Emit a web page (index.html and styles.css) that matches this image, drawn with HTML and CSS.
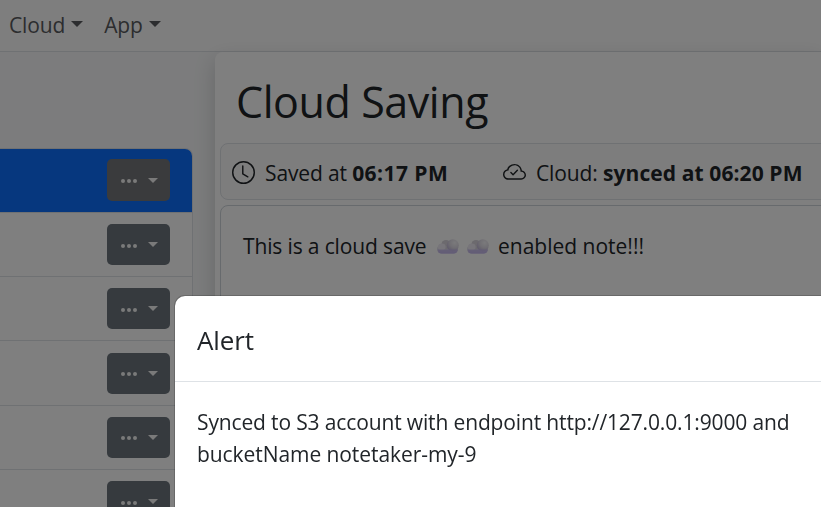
FILE: index.html
```
<!DOCTYPE html>
<html lang="en">
<head>
<meta charset="utf-8">
<title>Cloud Saving</title>
<link rel="stylesheet" href="styles.css">
</head>
<body>
<svg width="0" height="0" class="defs" aria-hidden="true">
  <defs>
    <linearGradient id="puff" x1="0" y1="0" x2="0" y2="1"><stop offset="0" stop-color="#f0edf4"/><stop offset=".55" stop-color="#dedaea"/><stop offset="1" stop-color="#c4b6ec"/></linearGradient>
    <radialGradient id="ball" cx=".65" cy=".3" r=".75"><stop offset="0" stop-color="#f6f5f8"/><stop offset=".55" stop-color="#e0dce6"/><stop offset="1" stop-color="#beb4d6"/></radialGradient>
    <symbol id="cloud" viewBox="0 0 22 15">
      <rect x="0" y="5.5" width="21" height="9" rx="4.5" fill="url(#puff)"/>
      <circle cx="9" cy="5.5" r="4.6" fill="#d8d4dc"/>
      <circle cx="15.8" cy="6.2" r="6" fill="url(#ball)"/>
      <ellipse cx="4.8" cy="8" rx="3.8" ry="3.4" fill="#eeeaf4"/>
      <path d="M.8 10.500h20.200q-1 4-4.500 4h-12Q1.500 14.500 .8 10.500" fill="#c5b9ec" opacity=".8"/>
    </symbol>
  </defs>
</svg>
<div class="app">
  <nav class="nav">
    <a class="nav-link cloud-link"><span>Cloud</span><i class="caret"></i></a>
    <a class="nav-link"><span>App</span><i class="caret"></i></a>
  </nav>
  <div class="main">
    <aside class="side">
      <ul class="list">
        <li class="item active"><button class="btn"><svg class="dots" viewBox="0 0 16 4"><circle cx="2" cy="2" r="2"/><circle cx="8" cy="2" r="2"/><circle cx="14" cy="2" r="2"/></svg><i class="caret"></i></button></li>
        <li class="item"><button class="btn"><svg class="dots" viewBox="0 0 16 4"><circle cx="2" cy="2" r="2"/><circle cx="8" cy="2" r="2"/><circle cx="14" cy="2" r="2"/></svg><i class="caret"></i></button></li>
        <li class="item"><button class="btn"><svg class="dots" viewBox="0 0 16 4"><circle cx="2" cy="2" r="2"/><circle cx="8" cy="2" r="2"/><circle cx="14" cy="2" r="2"/></svg><i class="caret"></i></button></li>
        <li class="item"><button class="btn"><svg class="dots" viewBox="0 0 16 4"><circle cx="2" cy="2" r="2"/><circle cx="8" cy="2" r="2"/><circle cx="14" cy="2" r="2"/></svg><i class="caret"></i></button></li>
        <li class="item"><button class="btn"><svg class="dots" viewBox="0 0 16 4"><circle cx="2" cy="2" r="2"/><circle cx="8" cy="2" r="2"/><circle cx="14" cy="2" r="2"/></svg><i class="caret"></i></button></li>
        <li class="item"><button class="btn"><svg class="dots" viewBox="0 0 16 4"><circle cx="2" cy="2" r="2"/><circle cx="8" cy="2" r="2"/><circle cx="14" cy="2" r="2"/></svg><i class="caret"></i></button></li>
      </ul>
    </aside>
    <section class="note">
      <h1 class="title">Cloud Saving</h1>
      <div class="status">
        <div class="saved">
          <svg class="icon" viewBox="0 0 16 16" fill="currentColor"><path d="M8 3.500a.5.5 0 0 0-1 0V9a.5.5 0 0 0 .252.434l3.500 2a.5.5 0 0 0 .496-.868L8 8.710z"/><path d="M8 16A8 8 0 1 0 8 0a8 8 0 0 0 0 16m7-8A7 7 0 1 1 1 8a7 7 0 0 1 14 0"/></svg>
          <span class="saved-text">Saved at <b>06:17 PM</b></span>
        </div>
        <div class="synced">
          <svg class="icon" viewBox="0 0 16 16" fill="currentColor"><path fill-rule="evenodd" d="M10.354 6.146a.5.5 0 0 1 0 .708l-3 3a.5.5 0 0 1-.708 0l-1.500-1.500a.5.5 0 1 1 .708-.708L7 8.793l2.646-2.647a.5.5 0 0 1 .708 0"/><path d="M4.406 3.342A5.530 5.530 0 0 1 8 2c2.690 0 4.923 2 5.166 4.579C14.758 6.804 16 8.137 16 9.773 16 11.569 14.502 13 12.687 13H3.781C1.708 13 0 11.366 0 9.318c0-1.763 1.266-3.223 2.942-3.593.143-.863.698-1.723 1.464-2.383m.653.757c-.757.653-1.153 1.440-1.153 2.056v.448l-.445.049C2.064 6.805 1 7.952 1 9.318 1 10.785 2.230 12 3.781 12h8.906C13.980 12 15 10.988 15 9.773c0-1.216-1.020-2.228-2.313-2.228h-.5v-.5C12.188 4.825 10.328 3 8 3a4.530 4.530 0 0 0-2.941 1.100z"/></svg>
          <span class="synced-text">Cloud: <b>synced at 06:20 PM</b></span>
        </div>
      </div>
      <div class="editor"><span class="pre">This is a cloud save</span><svg class="emoji"><use href="#cloud"/></svg><svg class="emoji"><use href="#cloud"/></svg><span class="post">enabled note!!!</span></div>
    </section>
  </div>
</div>
<div class="backdrop">
  <div class="modal" role="dialog">
    <header class="modal-head">Alert</header>
    <div class="modal-body"><div class="line1">Synced to S3 account with endpoint http://127.0.0.1:9000 and</div><div class="line2">bucketName notetaker-my-9</div></div>
  </div>
</div>
</body>
</html>
```

FILE: styles.css
```
* { box-sizing: border-box; }
body {
  margin: 0;
  width: 821px;
  height: 507px;
  overflow: hidden;
  background: #fff;
  color: #212529;
  font: 21px/32px "Open Sans", "Noto Sans", sans-serif;
  letter-spacing: -0.14px;
  white-space: nowrap;
}
.defs { position: absolute; }
.app { height: 507px; display: flex; flex-direction: column; overflow: hidden; }
.nav {
  flex: none;
  height: 52px;
  padding: 0 0 1px 9px;
  display: flex;
  align-items: center;
  gap: 21px;
  border-bottom: 1px solid #dee2e6;
  background: #fdfdfd;
  color: #595b5e;
}
.nav-link { display: flex; align-items: center; gap: 6px; }
.caret {
  border: 6px solid transparent;
  border-top-color: currentColor;
  border-bottom: 0;
}
.nav .caret { margin-top: -3px; }
.main { flex: 1; min-height: 0; display: flex; background: #f8f9fa; }
.side { flex: none; width: 215px; padding-top: 96px; }
.list {
  list-style: none;
  margin: 0;
  padding: 0;
  width: 193px;
  border: 1px solid #dee2e6;
  border-left: 0;
  border-radius: 0 8px 0 0;
  overflow: hidden;
}
.item {
  height: 64.25px;
  padding: 11.4px 22px 0 0;
  display: flex;
  justify-content: flex-end;
  align-items: flex-start;
  background: #fff;
  border-bottom: 1px solid #dee2e6;
}
.active { height: 63.8px; padding-top: 10px; background: #0d6efd; }
.btn {
  width: 63px;
  height: 41px;
  border: 0;
  border-radius: 5px;
  padding: 2px 12px 0 14px;
  display: flex;
  align-items: center;
  justify-content: space-between;
  background: #6c757d;
  color: #f4f4f4;
}
.active .btn { height: 42px; background: #74777b; }
.btn .caret { border-width: 5px; border-bottom: 0; margin-top: -2px; }
.dots { width: 16px; height: 4px; fill: currentColor; }
.note {
  flex: 1;
  min-width: 0;
  padding-left: 5px;
  border-radius: 8px 0 0 0;
  background: #fff;
  box-shadow: 0 8px 21px rgba(33, 37, 41, .2);
}
.title {
  margin: 0;
  height: 91px;
  padding: 1px 0 0 16px;
  font-size: 43px;
  font-weight: 400;
  line-height: 98px;
  letter-spacing: -0.42px;
}
.status {
  width: 700px;
  height: 57px;
  padding-left: 11px;
  display: flex;
  align-items: center;
  border: 1px solid #dee2e6;
  border-radius: 8px;
  background: #fbfbfb;
}
.saved, .synced { display: flex; align-items: center; gap: 10px; padding-top: 2px; }
.saved { width: 271px; }
.saved-text b { letter-spacing: 0.45px; }
.synced-text b { letter-spacing: 0.1px; }
.icon { width: 23px; height: 23px; }
.editor {
  width: 700px;
  height: 400px;
  margin-top: 5px;
  padding: 24px 22px;
  display: flex;
  align-items: flex-start;
  border: 1px solid #ced4da;
  border-radius: 8px;
}
.emoji { width: 22px; height: 15px; margin: 9px 0 0 8px; }
.pre { width: 186px; }
.post { margin-left: 9px; letter-spacing: 0; }
.backdrop { position: fixed; inset: 0; padding: 295px 0 0 174px; background: rgba(0, 0, 0, .5); }
.modal {
  width: 700px;
  height: 300px;
  border: 1px solid rgba(0, 0, 0, .175);
  border-radius: 11px;
  background: #fff;
  background-clip: padding-box;
}
.modal-head { height: 86px; padding: 28px 22px 0; font-size: 26px; border-bottom: 1px solid #dee2e6; }
.modal-body { padding: 24px 22px; }
.line2 { letter-spacing: -0.07px; }
```
